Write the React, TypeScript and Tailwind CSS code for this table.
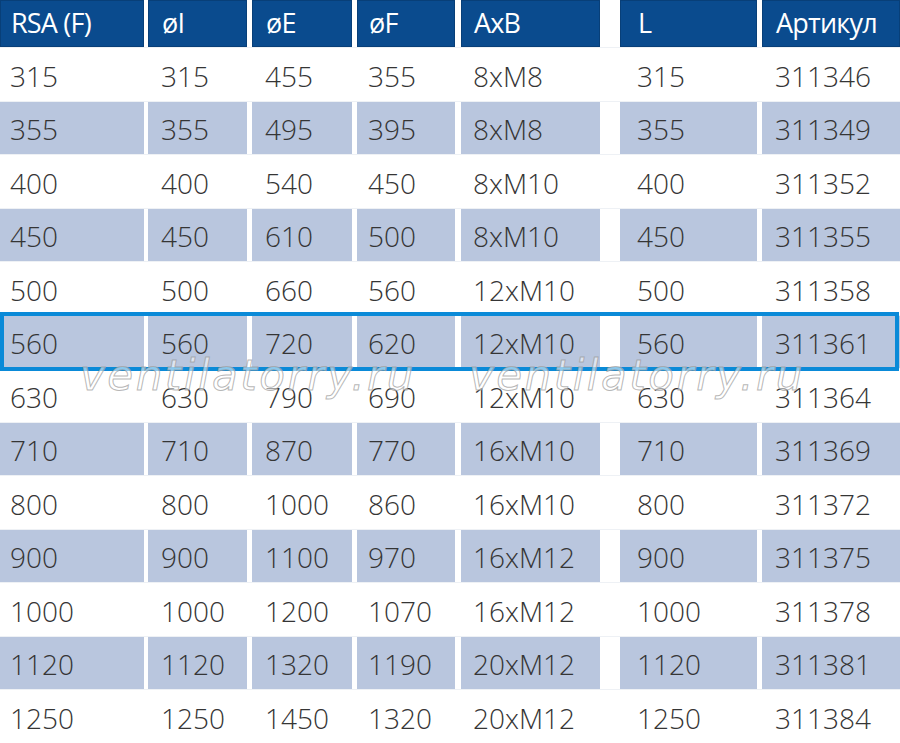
import React from "react";

const cols = [
  { w: "w-[144px]", ml: "ml-0", pl: "pl-[10px]" },
  { w: "w-[99px]", ml: "ml-[4px]", pl: "pl-[13px]" },
  { w: "w-[100px]", ml: "ml-[5px]", pl: "pl-[13px]" },
  { w: "w-[98px]", ml: "ml-[5px]", pl: "pl-[11px]" },
  { w: "w-[139px]", ml: "ml-[6px]", pl: "pl-[12px]" },
  { w: "w-[137px]", ml: "ml-[20px]", pl: "pl-[17px]" },
  { w: "w-[138px]", ml: "ml-[5px]", pl: "pl-[13px]" },
];

const header = ["RSA (F)", "øI", "øE", "øF", "AxB", "L", "Артикул"];

const rows: string[][] = [
  ["315", "315", "455", "355", "8xM8", "315", "311346"],
  ["355", "355", "495", "395", "8xM8", "355", "311349"],
  ["400", "400", "540", "450", "8xM10", "400", "311352"],
  ["450", "450", "610", "500", "8xM10", "450", "311355"],
  ["500", "500", "660", "560", "12xM10", "500", "311358"],
  ["560", "560", "720", "620", "12xM10", "560", "311361"],
  ["630", "630", "790", "690", "12xM10", "630", "311364"],
  ["710", "710", "870", "770", "16xM10", "710", "311369"],
  ["800", "800", "1000", "860", "16xM10", "800", "311372"],
  ["900", "900", "1100", "970", "16xM12", "900", "311375"],
  ["1000", "1000", "1200", "1070", "16xM12", "1000", "311378"],
  ["1120", "1120", "1320", "1190", "20xM12", "1120", "311381"],
  ["1250", "1250", "1450", "1320", "20xM12", "1250", "311384"],
];

export default function App() {
  return (
    <div className="relative w-[900px] h-[743px] bg-white overflow-hidden font-['Open_Sans','Noto_Sans',sans-serif]">
      <div className="flex h-[47px]">
        {header.map((h, i) => (
          <div
            key={i}
            className={`${cols[i].w} ${cols[i].ml} ${cols[i].pl} h-full flex items-center bg-[#0a4b8e] border border-[#083f78] text-white text-[27px] font-medium tracking-[-0.8px]`}
          >
            {h}
          </div>
        ))}
      </div>
      {rows.map((r, ri) => {
        const blue = ri % 2 === 1;
        return (
          <div key={ri} className="relative flex h-[53.5px] border-t border-[#eef1f5]">
            {r.map((c, ci) => (
              <div
                key={ci}
                className={`${cols[ci].w} ${cols[ci].ml} ${cols[ci].pl} h-full flex items-center pt-[3px] text-[28px] font-light text-[#353535] ${blue ? "bg-[#b9c6de]" : "bg-white"}`}
              >
                {c}
              </div>
            ))}
            {ri === 5 && (
              <div className="absolute z-10 -top-[4px] -bottom-[3px] left-0 right-[1px] border-[4px] border-[#0a8ad8] pointer-events-none" />
            )}
          </div>
        );
      })}
      <div className="absolute z-20 left-[80px] top-[344px] flex gap-[53px] pointer-events-none text-[42px] italic tracking-[2.5px] font-['DejaVu_Sans',sans-serif] font-light text-[rgba(255,255,255,0.55)] [-webkit-text-stroke:1px_rgba(150,150,150,0.7)]">
        <span>ventilatorry.ru</span>
        <span>ventilatorry.ru</span>
      </div>
    </div>
  );
}
